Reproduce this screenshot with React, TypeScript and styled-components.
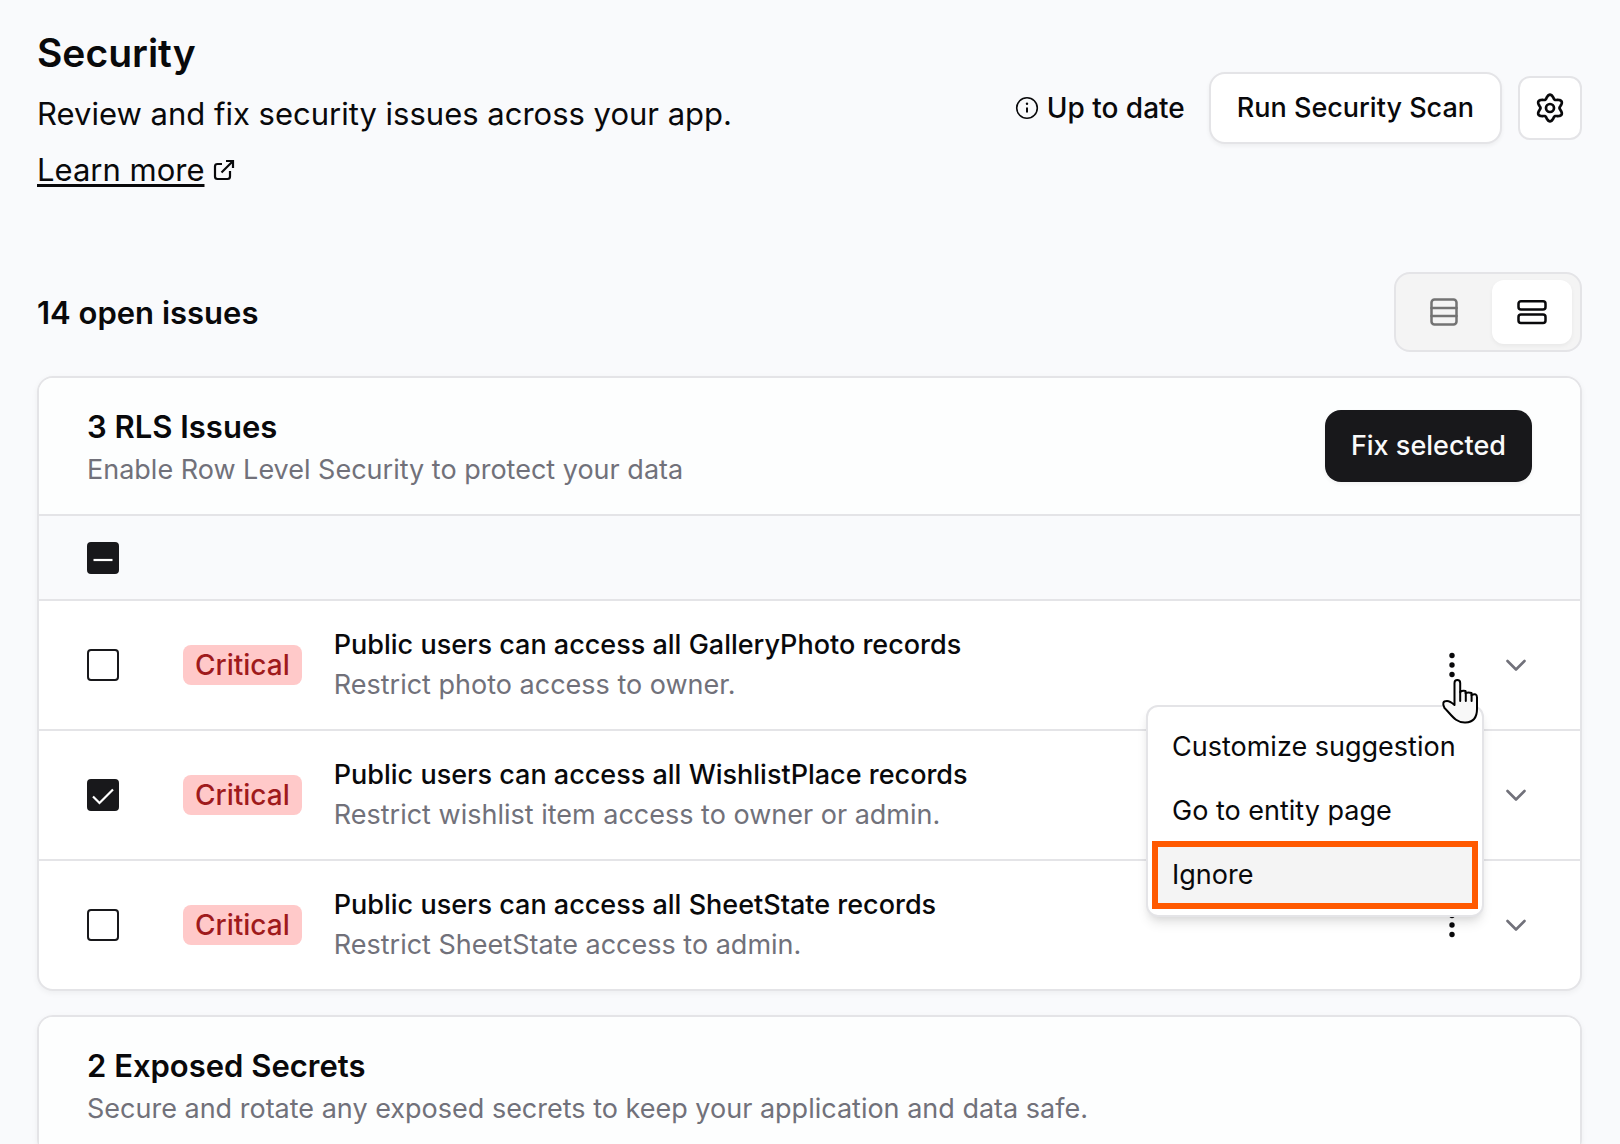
import React, { useEffect, useRef, useState } from 'react';
import styled, { createGlobalStyle } from 'styled-components';

const color = {
  page: '#f9fafc',
  ink: '#09090b',
  dark: '#18181b',
  muted: '#71717a',
  line: '#e4e4e7',
  accent: '#ff5900',
};

const GlobalStyle = createGlobalStyle`
  *, *::before, *::after { box-sizing: border-box; }
  body {
    margin: 0;
    background: ${color.page};
    color: ${color.ink};
    font-family: Inter, 'Open Sans', sans-serif;
    font-size: 27px;
    line-height: 40px;
    overflow-x: hidden;
  }
  h1, h2, h3, p, ul { margin: 0; padding: 0; }
  button { font: inherit; color: inherit; cursor: pointer; }
`;

const Page = styled.main`
  padding: 24px 38px 0 37px;
`;

const PageHeader = styled.header`
  display: flex;
  align-items: center;
  justify-content: space-between;
  gap: 24px;
`;

const Intro = styled.div`
  font-size: 31px;
  line-height: 56px;
`;

const PageTitle = styled.h1`
  margin-bottom: 4px;
  font-size: 39px;
  font-weight: 600;
  line-height: 58px;
`;

const LearnMore = styled.a`
  display: inline-flex;
  align-items: center;
  gap: 8px;
  color: inherit;
  text-decoration: none;

  span {
    text-decoration: underline;
    text-decoration-thickness: 3px;
    text-underline-offset: 3px;
    text-decoration-skip-ink: none;
  }
`;

const HeaderActions = styled.div`
  display: flex;
  align-items: center;
  align-self: flex-start;
  gap: 16px;
  margin-top: 48px;
`;

const Status = styled.span`
  display: flex;
  align-items: center;
  gap: 8px;
  margin-right: 8px;
  font-size: 28px;
  font-weight: 500;
  white-space: nowrap;
`;

const Button = styled.button<{ $primary?: boolean }>`
  height: 72px;
  padding: 0 26px;
  border: ${(p) => (p.$primary ? '0' : `2px solid ${color.line}`)};
  border-radius: 16px;
  background: ${(p) => (p.$primary ? color.dark : '#fff')};
  color: ${(p) => (p.$primary ? '#fafafa' : color.ink)};
  font-weight: 500;
  white-space: nowrap;
  box-shadow: 0 2px 4px rgba(0, 0, 0, 0.05);
`;

const SquareButton = styled.button<{ $framed?: boolean; $color?: string }>`
  display: grid;
  place-items: center;
  width: 64px;
  height: 64px;
  padding: 0;
  border: ${(p) => (p.$framed ? `2px solid ${color.line}` : '0')};
  border-radius: 12px;
  background: ${(p) => (p.$framed ? '#fff' : 'transparent')};
  color: ${(p) => p.$color ?? color.ink};
`;

const Toolbar = styled.div`
  display: flex;
  align-items: center;
  justify-content: space-between;
  margin: 74px 0 24px;
`;

const SectionTitle = styled.h2`
  && { padding-top: 2px; }
  font-size: 31px;
  font-weight: 600;
  line-height: 46px;
`;

const ViewToggle = styled.div`
  display: flex;
  gap: 8px;
  padding: 6px 8px;
  border: 2px solid ${color.line};
  border-radius: 16px;
  background: #f4f4f4;
`;

const ViewOption = styled.button<{ $active?: boolean }>`
  display: grid;
  place-items: center;
  width: 80px;
  height: 64px;
  padding: 0;
  border: 0;
  border-radius: 12px;
  background: ${(p) => (p.$active ? '#fff' : 'transparent')};
  color: ${(p) => (p.$active ? color.ink : '#737373')};
  box-shadow: ${(p) => (p.$active ? '0 2px 4px rgba(0, 0, 0, 0.05)' : 'none')};
`;

const Card = styled.section`
  margin-bottom: 24px;
  border: 2px solid ${color.line};
  border-radius: 16px;
  background: #fff;
  box-shadow: 0 2px 6px rgba(0, 0, 0, 0.05);
`;

const CardHeader = styled.header`
  display: flex;
  align-items: center;
  justify-content: space-between;
  padding: 24px 48px;
  border-radius: 14px 14px 0 0;
  background: #fdfefe;
`;

const Muted = styled.p`
  color: ${color.muted};
`;

const SelectAll = styled.div`
  display: flex;
  align-items: center;
  height: 87px;
  padding: 0 48px;
  border: solid ${color.line};
  border-width: 2px 0;
  background: ${color.page};
`;

const IssueList = styled.ul`
  list-style: none;
`;

const IssueRow = styled.li`
  display: flex;
  align-items: center;
  padding: 24px 32px 24px 48px;

  & + & { border-top: 2px solid ${color.line}; }
`;

const CheckWrap = styled.span`
  position: relative;
  display: flex;

  svg {
    position: absolute;
    inset: 0;
    pointer-events: none;
  }
`;

const Check = styled.input`
  appearance: none;
  width: 32px;
  height: 32px;
  margin: 0;
  border: 2px solid ${color.dark};
  border-radius: 4px;
  background: #fff;

  &:checked, &:indeterminate { background: ${color.dark}; }
`;

const Badge = styled.span`
  margin: 0 32px 0 64px;
  padding: 0 12px;
  border-radius: 8px;
  background: #ffc9c9;
  color: #9f1a1c;
  font-size: 28px;
  font-weight: 500;
`;

const IssueText = styled.div`
  flex: 1;
  min-width: 0;
`;

const IssueTitle = styled.h3`
  font-size: 27px;
  font-weight: 500;
  line-height: 40px;
`;

const MenuAnchor = styled.div`
  position: relative;
`;

const Menu = styled.div`
  position: absolute;
  top: 72px;
  right: 0;
  z-index: 2;
  display: flex;
  flex-direction: column;
  min-width: 338px;
  padding: 8px;
  border: 2px solid ${color.line};
  border-radius: 12px;
  background: #fff;
  box-shadow: 0 8px 12px -2px rgba(0, 0, 0, 0.1), 0 4px 8px -4px rgba(0, 0, 0, 0.1);
`;

const MenuItem = styled.button<{ $highlighted?: boolean }>`
  height: ${(p) => (p.$highlighted ? 68 : 64)}px;
  margin: ${(p) => (p.$highlighted ? '-2px -4px' : '0')};
  padding: 0 ${(p) => (p.$highlighted ? 14 : 16)}px;
  border: ${(p) => (p.$highlighted ? `6px solid ${color.accent}` : '0')};
  background: ${(p) => (p.$highlighted ? '#f4f4f4' : 'transparent')};
  text-align: left;
  white-space: nowrap;
`;

const Pointer = styled.svg`
  position: absolute;
  z-index: 3;
  top: 45px;
  left: 21px;
  pointer-events: none;
`;

const stroke = {
  fill: 'none',
  stroke: 'currentColor',
  strokeLinecap: 'round' as const,
  strokeLinejoin: 'round' as const,
};

const ExternalIcon = () => (
  <svg width="24" height="24" viewBox="0 0 24 24" {...stroke} strokeWidth="2.200" strokeLinecap="butt" strokeLinejoin="miter">
    <path d="M10 6H5.500Q3 6 3 8.500V18.500Q3 21 5.500 21H15.500Q18 21 18 18.500V13" />
    <path d="M14 3H21V10M21 3L9.500 14.500" />
  </svg>
);

const InfoIcon = () => (
  <svg width="24" height="24" viewBox="0 0 24 24" {...stroke} strokeWidth="1.600">
    <circle cx="12" cy="12" r="10.300" />
    <path d="M12 11.500V16.500" strokeLinecap="butt" strokeWidth="2" />
    <circle cx="12" cy="7.800" r="1.200" fill="currentColor" stroke="none" />
  </svg>
);

// Six-lobed outline: the radius swings between the teeth and the valleys.
const gearOutline = Array.from({ length: 120 }, (_, i) => {
  const t = (i / 120) * Math.PI * 2;
  const r = 11.4 - 1.9 * Math.cos(6 * t);
  return `${(18 + r * Math.cos(t)).toFixed(2)},${(18 + r * Math.sin(t)).toFixed(2)}`;
}).join(' ');

const GearIcon = () => (
  <svg width="36" height="36" viewBox="0 0 36 36" {...stroke} strokeWidth="2.700">
    <polygon points={gearOutline} />
    <circle cx="18" cy="18" r="4" />
  </svg>
);

const TableIcon = () => (
  <svg width="32" height="32" viewBox="0 0 32 32" {...stroke} strokeWidth="2.500">
    <rect x="3.500" y="3.500" width="25" height="25" rx="3" />
    <path d="M3.500 12H28.500M3.500 20H28.500" />
  </svg>
);

const CardsIcon = () => (
  <svg width="32" height="32" viewBox="0 0 32 32" {...stroke} strokeWidth="2.500">
    <rect x="2.500" y="5.200" width="27" height="8.400" rx="2.500" />
    <rect x="2.500" y="18.500" width="27" height="8.400" rx="2.500" />
  </svg>
);

const KebabIcon = () => (
  <svg width="32" height="32" viewBox="0 0 32 32" fill="currentColor">
    <circle cx="16" cy="6.500" r="2.700" />
    <circle cx="16" cy="16" r="2.700" />
    <circle cx="16" cy="25.500" r="2.700" />
  </svg>
);

const ChevronIcon = () => (
  <svg width="32" height="32" viewBox="0 0 32 32" {...stroke} strokeWidth="2.600">
    <path d="M7.500 12L16 20.500L24.500 12" />
  </svg>
);

const HandPointer = () => (
  <Pointer width="38" height="46" viewBox="0 0 38 46" {...stroke} stroke="#000" strokeWidth="2">
    <path
      fill="#f8f8f8"
      d="M13.500 27V5Q13.500 2 16.300 2Q19.200 2 19.200 5V14Q21 12.300 24.500 13V15Q27.500 13.800 30.500 15V17Q36 14.500 36 19.500V31Q36 44 24.500 44.500C14 45 10 36 3.500 30Q0 23 6 23Q9 23 13.500 27Z"
    />
    <path d="M19.200 14V23M24.800 15V23M30.600 17V23" />
  </Pointer>
);

type CheckState = 'off' | 'on' | 'mixed';

function Checkbox({ state, label, onToggle }: { state: CheckState; label: string; onToggle: () => void }) {
  const ref = useRef<HTMLInputElement>(null);
  useEffect(() => {
    if (ref.current) ref.current.indeterminate = state === 'mixed';
  }, [state]);
  return (
    <CheckWrap>
      <Check ref={ref} type="checkbox" aria-label={label} checked={state === 'on'} onChange={onToggle} />
      {state !== 'off' && (
        <svg width="32" height="32" viewBox="0 0 32 32" fill="none" stroke="#fff" strokeWidth="2.200">
          <path d={state === 'on' ? 'M6 17.500L12.500 24L26 10.500' : 'M6.500 18H25.500'} />
        </svg>
      )}
    </CheckWrap>
  );
}

const issues = [
  { entity: 'GalleryPhoto', hint: 'Restrict photo access to owner.' },
  { entity: 'WishlistPlace', hint: 'Restrict wishlist item access to owner or admin.' },
  { entity: 'SheetState', hint: 'Restrict SheetState access to admin.' },
];

export default function App() {
  const [selected, setSelected] = useState([false, true, false]);
  const [openMenu, setOpenMenu] = useState(0);
  const [view, setView] = useState<'table' | 'cards'>('cards');

  const all = selected.every(Boolean);
  const summary: CheckState = all ? 'on' : selected.some(Boolean) ? 'mixed' : 'off';

  return (
    <>
      <GlobalStyle />
      <Page>
        <PageHeader>
          <Intro>
            <PageTitle>Security</PageTitle>
            <p>Review and fix security issues across your app.</p>
            <LearnMore href="#learn-more">
              <span>Learn more</span>
              <ExternalIcon />
            </LearnMore>
          </Intro>
          <HeaderActions>
            <Status>
              <InfoIcon />
              Up to date
            </Status>
            <Button type="button">Run Security Scan</Button>
            <SquareButton type="button" $framed aria-label="Settings">
              <GearIcon />
            </SquareButton>
          </HeaderActions>
        </PageHeader>

        <Toolbar>
          <SectionTitle>14 open issues</SectionTitle>
          <ViewToggle>
            <ViewOption type="button" aria-label="Table view" $active={view === 'table'} onClick={() => setView('table')}>
              <TableIcon />
            </ViewOption>
            <ViewOption type="button" aria-label="Card view" $active={view === 'cards'} onClick={() => setView('cards')}>
              <CardsIcon />
            </ViewOption>
          </ViewToggle>
        </Toolbar>

        <Card>
          <CardHeader>
            <div>
              <SectionTitle>3 RLS Issues</SectionTitle>
              <Muted>Enable Row Level Security to protect your data</Muted>
            </div>
            <Button type="button" $primary>
              Fix selected
            </Button>
          </CardHeader>
          <SelectAll>
            <Checkbox state={summary} label="Select all" onToggle={() => setSelected(selected.map(() => !all))} />
          </SelectAll>
          <IssueList>
            {issues.map((issue, i) => (
              <IssueRow key={issue.entity}>
                <Checkbox
                  state={selected[i] ? 'on' : 'off'}
                  label={`Select ${issue.entity}`}
                  onToggle={() => setSelected(selected.map((s, j) => (j === i ? !s : s)))}
                />
                <Badge>Critical</Badge>
                <IssueText>
                  <IssueTitle>Public users can access all {issue.entity} records</IssueTitle>
                  <Muted>{issue.hint}</Muted>
                </IssueText>
                <MenuAnchor>
                  <SquareButton type="button" aria-label="More actions" onClick={() => setOpenMenu(openMenu === i ? -1 : i)}>
                    <KebabIcon />
                  </SquareButton>
                  {openMenu === i && (
                    <>
                      <Menu>
                        <MenuItem type="button">Customize suggestion</MenuItem>
                        <MenuItem type="button">Go to entity page</MenuItem>
                        <MenuItem type="button" $highlighted>
                          Ignore
                        </MenuItem>
                      </Menu>
                      <HandPointer />
                    </>
                  )}
                </MenuAnchor>
                <SquareButton type="button" aria-label="Expand" $color={color.muted}>
                  <ChevronIcon />
                </SquareButton>
              </IssueRow>
            ))}
          </IssueList>
        </Card>

        <Card>
          <CardHeader>
            <div>
              <SectionTitle>2 Exposed Secrets</SectionTitle>
              <Muted>Secure and rotate any exposed secrets to keep your application and data safe.</Muted>
            </div>
          </CardHeader>
        </Card>
      </Page>
    </>
  );
}
